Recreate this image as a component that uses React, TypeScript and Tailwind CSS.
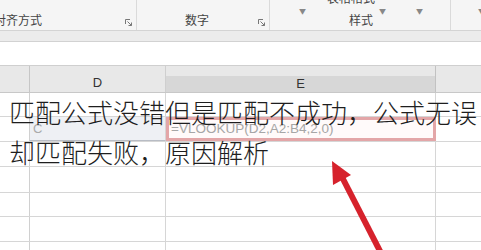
const font = { fontFamily: '"Noto Sans CJK SC", "Noto Sans", sans-serif' };

function Launcher() {
  return (
    <svg width="7" height="7" viewBox="0 0 7 7" className="text-[#777]">
      <path d="M0.5 5V0.5H5" stroke="currentColor" fill="none" strokeWidth="1" />
      <path d="M2.5 2.5L6.5 6.5M6.5 3.5V6.5H3.5" stroke="currentColor" fill="none" strokeWidth="1" />
    </svg>
  );
}

function Caret() {
  return <span className="text-[7px] leading-none text-[#888]">▼</span>;
}

function Row({ h, children }: { h: string; children?: React.ReactNode }) {
  return (
    <div className={`flex ${h} border-b border-[#d6d6d6]`}>
      <div className="w-[30px] border-r border-[#d0d0d0]" />
      <div className="w-[136px] border-r border-[#d6d6d6]" />
      <div className="w-[270px] border-r border-[#d6d6d6]" />
      <div className="flex-1" />
      {children}
    </div>
  );
}

export default function App() {
  return (
    <div
      className="relative w-[481px] h-[250px] overflow-hidden bg-white"
      style={font}
    >
      {/* ribbon */}
      <div className="flex h-[31px] bg-[#f5f5f5] border-b border-[#d4d4d4] text-[12px] text-[#444]">
        <div className="w-[137px] border-r border-[#dadada] flex items-end justify-between pb-[3px] pr-[4px] my-[0px]">
          <span className="-ml-[6px] leading-[14px]">对齐方式</span>
          <span className="mb-[1px]"><Launcher /></span>
        </div>
        <div className="w-[133px] border-r border-[#dadada] flex items-end pb-[3px] pr-[4px]">
          <span className="ml-[48px] leading-[14px]">数字</span>
          <span className="ml-auto mb-[1px]"><Launcher /></span>
        </div>
        <div className="w-[181px] border-r border-[#dadada] relative flex items-end pb-[3px]">
          <span className="absolute left-[29px] top-0"><Caret /></span>
          <span className="absolute left-[57px] -top-[9px] leading-[14px]">表格格式</span>
          <span className="absolute left-[109px] top-0"><Caret /></span>
          <span className="absolute left-[146px] top-0"><Caret /></span>
          <span className="ml-[79px] leading-[14px]">样式</span>
        </div>
        <div className="flex-1 relative">
          <span className="absolute left-[27px] top-0"><Caret /></span>
        </div>
      </div>

      {/* gap band */}
      <div className="h-[11px] bg-[#ececec] border-b border-[#d2d2d2]" />

      {/* formula bar */}
      <div className="h-[24px] bg-white border-b border-[#cfcfcf]" />

      {/* column headers */}
      <div className="flex h-[27px] bg-[#e8e8e8] border-b border-[#c8c8c8] text-[13px] text-[#333]">
        <div className="w-[30px] border-r border-[#c6c6c6]" />
        <div className="w-[136px] border-r border-[#cfcfcf] flex items-end justify-center pb-[1px]">
          <span className="leading-[16px]" style={{ fontFamily: '"Liberation Sans", sans-serif' }}>D</span>
        </div>
        <div className="w-[270px] border-r border-[#c2c2c2] flex flex-col">
          <div className="h-[10px]" />
          <div className="flex-1 bg-[#d7d7d7] flex items-center justify-center">
            <span className="leading-[14px]" style={{ fontFamily: '"Liberation Sans", sans-serif' }}>E</span>
          </div>
        </div>
        <div className="flex-1" />
      </div>

      {/* grid */}
      <Row h="h-[24px]" />
      <div className="flex h-[25px] border-b border-[#d6d6d6]">
        <div className="w-[30px] border-r border-[#d0d0d0]" />
        <div className="w-[136px] border-r border-[#d6d6d6] bg-[#eef0f4] border-b border-b-[#b8bcc4] flex items-center pl-[3px] text-[13px] text-[#aaa]" style={{ fontFamily: '"Liberation Sans", sans-serif' }}>
          C
        </div>
        <div className="w-[270px] border-[3px] border-[#e3a6a8] bg-[#fffafa] flex items-center pl-[2px] text-[13.5px] text-[#a6a6a6]" style={{ fontFamily: '"Liberation Sans", sans-serif' }}>
          =VLOOKUP(D2,A2:B4,2,0)
        </div>
        <div className="flex-1" />
      </div>
      <Row h="h-[25px]" />
      <Row h="h-[26px]" />
      <Row h="h-[24px]" />
      <Row h="h-[25px]" />
      <Row h="h-[25px]" />

      {/* headline overlay */}
      <div className="absolute left-[9px] top-[92px] whitespace-nowrap text-[26px] leading-[40px] text-[#1e1e1e] font-light">
        匹配公式没错但是匹配不成功，公式无误
        <br />
        却匹配失败，原因解析
      </div>

      {/* arrow */}
      <svg className="absolute left-[320px] top-[155px]" width="70" height="95" viewBox="0 0 70 95">
        <line x1="22" y1="22" x2="62" y2="100" stroke="#d6222c" strokeWidth="6" />
        <polygon points="12,6 31,20 13,30" fill="#d6222c" />
      </svg>
    </div>
  );
}
